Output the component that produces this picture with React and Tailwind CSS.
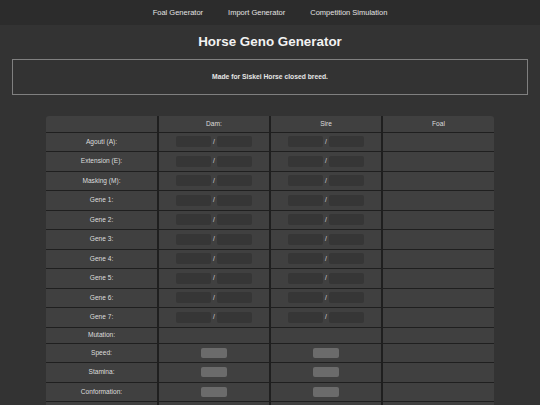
const links = ["Foal Generator", "Import Generator", "Competition Simulation"];

const genes = [
  "Agouti (A):",
  "Extension (E):",
  "Masking (M):",
  "Gene 1:",
  "Gene 2:",
  "Gene 3:",
  "Gene 4:",
  "Gene 5:",
  "Gene 6:",
  "Gene 7:",
];

const stats = ["Speed:", "Stamina:", "Conformation:"];

function AlleleInputs() {
  return (
    <div className="flex items-center justify-center gap-[2px]">
      <input className="h-[11px] w-[35px] rounded-[2px] bg-[#363636] outline-none" />
      <span className="text-[6.6px] text-[#ddd]">/</span>
      <input className="h-[11px] w-[35px] rounded-[2px] bg-[#363636] outline-none" />
    </div>
  );
}

function StatInput() {
  return (
    <div className="flex justify-center">
      <input className="h-[10px] w-[26px] rounded-[2px] bg-[#6b6b6b] outline-none" />
    </div>
  );
}

const cell = "border-x-2 border-y border-[#1f1f1f] p-0 text-center align-middle";

export default function App() {
  return (
    <div className="min-h-screen bg-[#333333] font-['Liberation_Sans',Arial,sans-serif] text-[#ddd]">
      <nav className="flex h-[25px] items-center justify-center gap-[25px] bg-[#2c2c2c] text-[7.5px] text-[#e2e2e2]">
        {links.map((l) => (
          <a key={l} href="#">
            {l}
          </a>
        ))}
      </nav>

      <h1 className="mt-[9px] text-center text-[13.4px] font-bold leading-[16px] text-[#f2f2f2]">
        Horse Geno Generator
      </h1>

      <div className="mx-[12px] mt-[9px] flex h-[36px] items-center justify-center border border-[#808080]">
        <p className="text-[6.75px] font-bold text-[#e6e6e6]">Made for Siskei Horse closed breed.</p>
      </div>

      <div className="mx-auto mt-[21px] w-[448px] overflow-hidden rounded-t-[3px]">
        <table className="w-full table-fixed border-collapse bg-[#404040] text-[6.6px]">
          <thead>
            <tr className="h-[16px]">
              <th className={cell + " border-l-0 border-t-0 font-normal"}></th>
              <th className={cell + " border-t-0 font-normal"}>Dam:</th>
              <th className={cell + " border-t-0 font-normal"}>Sire</th>
              <th className={cell + " border-r-0 border-t-0 font-normal"}>Foal</th>
            </tr>
          </thead>
          <tbody>
            {genes.map((g) => (
              <tr key={g} className="h-[19.5px]">
                <td className={cell + " border-l-0"}>{g}</td>
                <td className={cell}>
                  <AlleleInputs />
                </td>
                <td className={cell}>
                  <AlleleInputs />
                </td>
                <td className={cell + " border-r-0"}></td>
              </tr>
            ))}
            <tr className="h-[16px]">
              <td className={cell + " border-l-0"}>Mutation:</td>
              <td className={cell}></td>
              <td className={cell}></td>
              <td className={cell + " border-r-0"}></td>
            </tr>
            {stats.map((s) => (
              <tr key={s} className="h-[19.5px]">
                <td className={cell + " border-l-0"}>{s}</td>
                <td className={cell}>
                  <StatInput />
                </td>
                <td className={cell}>
                  <StatInput />
                </td>
                <td className={cell + " border-r-0"}></td>
              </tr>
            ))}
            <tr className="h-[19.5px]">
              <td className={cell + " border-l-0"}></td>
              <td className={cell}></td>
              <td className={cell}></td>
              <td className={cell + " border-r-0"}></td>
            </tr>
          </tbody>
        </table>
      </div>
    </div>
  );
}
